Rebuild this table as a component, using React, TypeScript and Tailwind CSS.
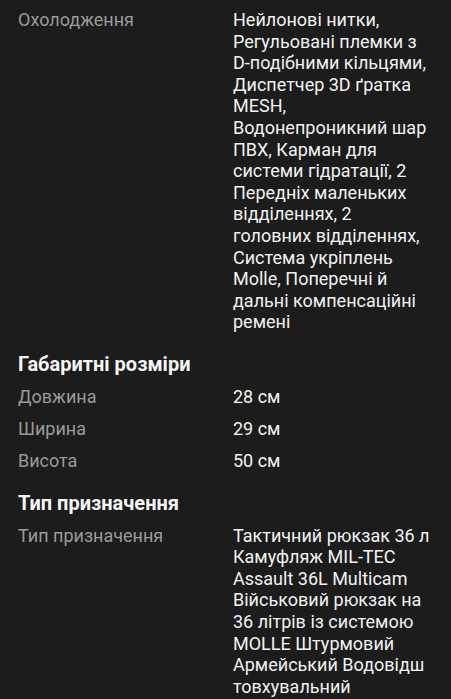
const sections = [
  {
    title: null,
    rows: [
      {
        label: 'Охолодження',
        value:
          'Нейлонові нитки, Регульовані племки з D-подібними кільцями, Диспетчер 3D ґратка MESH, Водонепроникний шар ПВХ, Карман для системи гідратації, 2 Передніх маленьких відділеннях, 2 головних відділеннях, Система укріплень Molle, Поперечні й дальні компенсаційні ремені'
      }
    ]
  },
  {
    title: 'Габаритні розміри',
    rows: [
      { label: 'Довжина', value: '28 см' },
      { label: 'Ширина', value: '29 см' },
      { label: 'Висота', value: '50 см' }
    ]
  },
  {
    title: 'Тип призначення',
    rows: [
      {
        label: 'Тип призначення',
        value:
          'Тактичний рюкзак 36 л Камуфляж MIL-TEC Assault 36L Multicam Військовий рюкзак на 36 літрів із системою MOLLE Штурмовий Армейський Водовідш товхувальний'
      }
    ]
  }
];

export default function App() {
  return (
    <div className="min-h-[699px] w-[451px] overflow-hidden bg-[#1c1c1c] pl-[18px] pr-[20px] pt-1 font-['Roboto',sans-serif]">
      {sections.map((section, i) => (
        <section key={i}>
          {section.title && (
            <h3 className="pb-[5px] pt-[14.5px] text-[20px] font-bold leading-6 text-[#f5f5f5]">{section.title}</h3>
          )}
          {section.rows.map((row) => (
            <div key={row.label} className="grid grid-cols-[215px_1fr] py-[5px] text-[18px] leading-[21.6px]">
              <span className="text-[#9a9a9a]">{row.label}</span>
              <span className="text-[#f2f2f2]">{row.value}</span>
            </div>
          ))}
        </section>
      ))}
    </div>
  );
}
